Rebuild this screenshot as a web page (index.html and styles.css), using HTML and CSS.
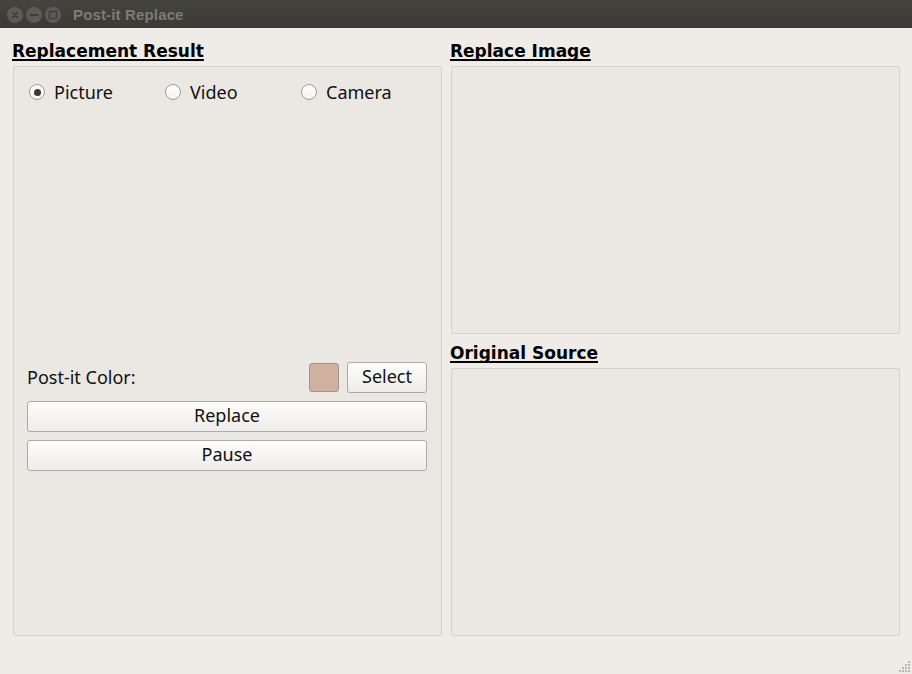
FILE: index.html
```html
<!DOCTYPE html>
<html>
<head>
<meta charset="utf-8">
<title>Post-it Replace</title>
<link rel="stylesheet" href="styles.css">
</head>
<body>
<div class="window">
  <div class="titlebar">
    <div class="controls">
      <span class="ctl">
        <svg width="16" height="16" viewBox="0 0 16 16"><path d="M5.5 5.5 L10.5 10.5 M10.5 5.5 L5.5 10.5" stroke="#3e3d39" stroke-width="1.6" stroke-linecap="round"/></svg>
      </span>
      <span class="ctl">
        <svg width="16" height="16" viewBox="0 0 16 16"><path d="M4.5 8 H11.5" stroke="#3e3d39" stroke-width="1.8" stroke-linecap="round"/></svg>
      </span>
      <span class="ctl">
        <svg width="16" height="16" viewBox="0 0 16 16"><rect x="4.5" y="4.5" width="7" height="7" fill="none" stroke="#3e3d39" stroke-width="1.4"/></svg>
      </span>
    </div>
    <div class="title">Post-it Replace</div>
  </div>

  <div class="content">
    <div class="col col-left">
      <h2 class="heading">Replacement Result</h2>
      <div class="box box-left">
        <div class="radios">
          <label class="radio"><span class="ind checked"></span><span>Picture</span></label>
          <label class="radio"><span class="ind"></span><span>Video</span></label>
          <label class="radio"><span class="ind"></span><span>Camera</span></label>
        </div>
        <div class="color-row">
          <span class="label">Post-it Color:</span>
          <span class="swatch"></span>
          <button class="btn btn-select">Select</button>
        </div>
        <button class="btn btn-wide">Replace</button>
        <button class="btn btn-wide">Pause</button>
      </div>
    </div>
    <div class="col col-right">
      <h2 class="heading">Replace Image</h2>
      <div class="box box-right"></div>
      <h2 class="heading heading-second">Original Source</h2>
      <div class="box box-right"></div>
    </div>
  </div>

  <svg class="grip" width="12" height="14" viewBox="0 0 12 14">
    <g fill="#b9b5b0">
      <rect x="9" y="1" width="2" height="2"/>
      <rect x="6" y="4" width="2" height="2"/><rect x="9" y="4" width="2" height="2"/>
      <rect x="3" y="7" width="2" height="2"/><rect x="6" y="7" width="2" height="2"/><rect x="9" y="7" width="2" height="2"/>
      <rect x="0" y="10" width="2" height="2"/><rect x="3" y="10" width="2" height="2"/><rect x="6" y="10" width="2" height="2"/><rect x="9" y="10" width="2" height="2"/>
    </g>
  </svg>
</div>
</body>
</html>
```

FILE: styles.css
```css
* { box-sizing: border-box; }

html, body {
  margin: 0;
  padding: 0;
  width: 912px;
  height: 674px;
  overflow: hidden;
  background: #efebe7;
}

.window {
  position: relative;
  width: 912px;
  height: 674px;
  background: #efebe7;
  font-family: "Noto Sans", "Open Sans", sans-serif;
  color: #111;
}

.titlebar {
  height: 28px;
  display: flex;
  align-items: flex-start;
  background: linear-gradient(#45443f, #3a3935);
}

.controls {
  display: flex;
  gap: 3px;
  margin-top: 7px;
  margin-left: 7px;
}

.ctl {
  width: 16px;
  height: 16px;
  border-radius: 50%;
  background: #5c5b57;
  display: block;
}

.ctl svg { display: block; }

.title {
  margin-left: 12px;
  margin-top: 5px;
  line-height: 20px;
  font-family: "Liberation Sans", Arial, sans-serif;
  font-weight: bold;
  font-size: 15px;
  letter-spacing: 0.15px;
  color: #7d7b75;
}

.content {
  display: flex;
  gap: 8px;
  padding: 14px 12px 0 12px;
}

.col {
  display: flex;
  flex-direction: column;
}

.col-left { width: 430px; }
.col-right { width: 450px; }

.heading {
  margin: 0 0 5px 0;
  font-family: "DejaVu Sans", sans-serif;
  font-weight: bold;
  font-size: 17px;
  line-height: 19px;
  color: #000;
  align-self: flex-start;
  text-decoration: underline;
  text-decoration-thickness: 2px;
  text-underline-offset: 2px;
  text-decoration-skip-ink: none;
}

.heading-second { margin-top: 10px; }

.box {
  margin-left: 1px;
  background: #ebe8e4;
  border: 1px solid #d5d1cc;
  border-radius: 2px;
}

.box-left {
  height: 570px;
  padding: 13px 14px 0 13px;
  display: flex;
  flex-direction: column;
}

.box-right {
  height: 268px;
}

.radios {
  display: grid;
  grid-template-columns: 136px 136px auto;
  padding-left: 2px;
  height: 24px;
}

.radio {
  display: flex;
  align-items: center;
  gap: 9px;
  font-size: 18px;
  line-height: 24px;
}

.ind {
  width: 16px;
  height: 16px;
  border-radius: 50%;
  border: 1px solid #a19d98;
  background: linear-gradient(#ffffff, #f3f2f0);
  display: flex;
  align-items: center;
  justify-content: center;
}

.ind.checked::after {
  content: "";
  width: 7px;
  height: 7px;
  border-radius: 50%;
  background: #3a3a3a;
}

.color-row {
  margin-top: 258px;
  display: flex;
  align-items: center;
  height: 31px;
}

.label {
  flex: 1;
  font-size: 18px;
  line-height: 24px;
  padding-bottom: 1px;
}

.swatch {
  width: 30px;
  height: 29px;
  background: #d1b2a1;
  border: 1px solid #a69286;
  border-radius: 3px;
  margin-right: 8px;
}

.btn {
  font-family: "Noto Sans", "Open Sans", sans-serif;
  font-size: 18px;
  line-height: 24px;
  color: #111;
  height: 31px;
  padding: 0 0 3px 0;
  border: 1px solid #aeaaa5;
  border-radius: 3px;
  background: linear-gradient(#fcfcfb, #efedeb);
}

.btn-select { width: 80px; }

.btn-wide {
  width: 400px;
  margin-top: 8px;
}

.grip {
  position: absolute;
  right: 1px;
  bottom: 0;
}
```
